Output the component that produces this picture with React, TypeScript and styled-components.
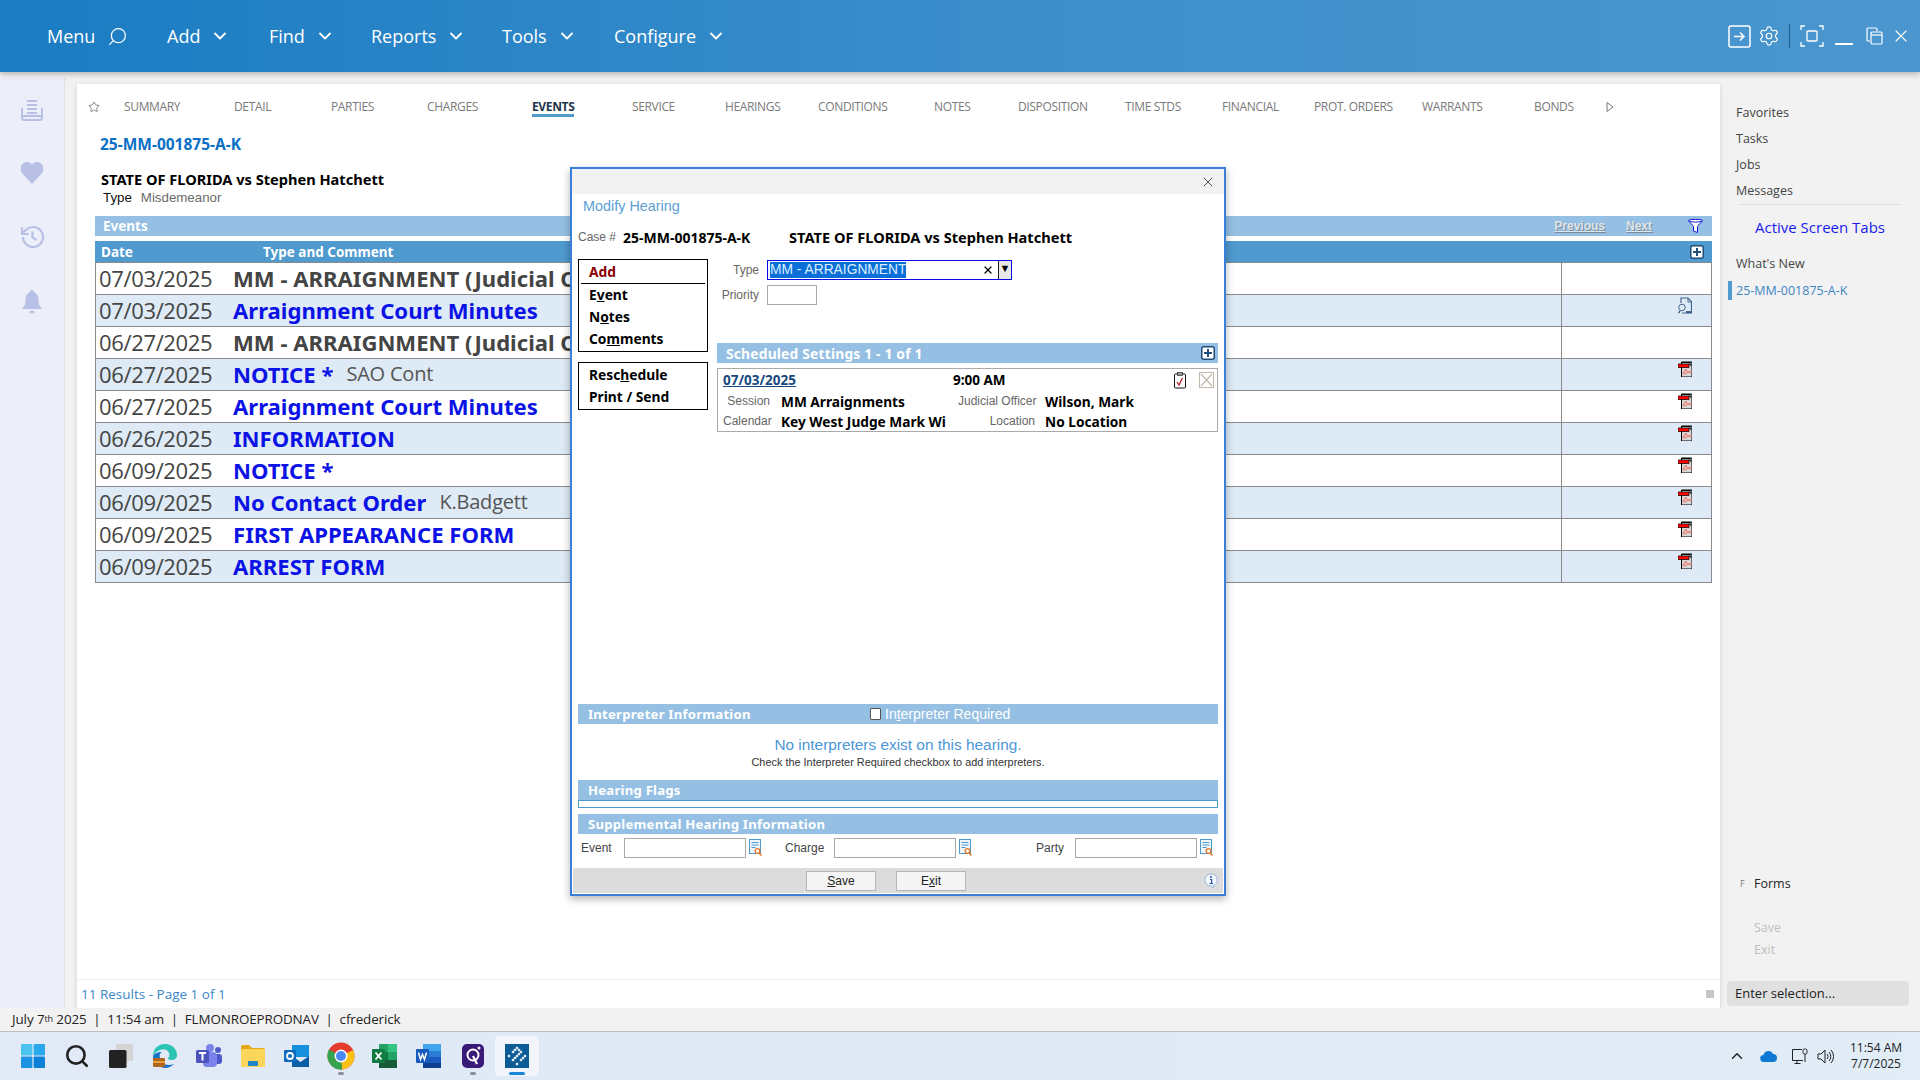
import React from "react";
import styled, { createGlobalStyle } from "styled-components";
import { ChevronDown, ChevronUp, Search, Settings, X, Star } from "lucide-react";

const SEGOE = `"Open Sans", "Noto Sans", sans-serif`;
const TAHOMA = `"Liberation Sans", Arial, sans-serif`;
const TAHOMA_BOLD = `"Noto Sans", "Liberation Sans", sans-serif`;

const GlobalStyle = createGlobalStyle`
  html, body { margin: 0; padding: 0; overflow: hidden; background: #f2f2f2; }
  #root { width: 1920px; height: 1080px; }
  * { box-sizing: border-box; }
`;

const Page = styled.div`
  position: relative;
  width: 1920px;
  height: 1080px;
  display: flex;
  flex-direction: column;
  background: #f2f2f2;
  font-family: ${SEGOE};
  overflow: hidden;
`;

/* top bar */
const TopBar = styled.header`
  height: 72px;
  flex: none;
  display: flex;
  align-items: center;
  justify-content: space-between;
  padding: 0 7px 0 47px;
  background: linear-gradient(90deg, #1a7cc3 0%, #3d8fcb 55%, #4b96cf 100%);
  box-shadow: 0 2px 6px rgba(0, 0, 0, 0.28);
  position: relative;
  z-index: 2;
`;

const MenuList = styled.nav`
  display: flex;
  align-items: center;
`;

const MenuItem = styled.div<{ $w: number }>`
  width: ${(p) => p.$w}px;
  display: flex;
  align-items: center;
  gap: 10px;
  color: #fff;
  font-size: 18px;
  line-height: 24px;
`;

const MenuSearch = styled(Search)`
  margin-left: 2px;
  transform: scaleX(-1);
`;

const WinIcons = styled.div`
  display: flex;
  align-items: center;
  color: #fff;
`;

const WinSlot = styled.div<{ $w: number }>`
  width: ${(p) => p.$w}px;
  display: flex;
  justify-content: center;
  align-items: center;
`;

const WinDivider = styled.div`
  width: 1px;
  height: 24px;
  background: #1f5f92;
  margin: 0 5px;
`;

/* body */
const Body = styled.div`
  flex: none;
  height: 936px;
  display: flex;
`;

const Rail = styled.aside`
  width: 65px;
  margin-top: 6px;
  background: #eceffa;
  border-right: 1px solid #dcdfe8;
  display: flex;
  flex-direction: column;
  align-items: center;
  padding-top: 21px;
  gap: 41px;
  color: #b8c0e6;
  flex: none;
`;

const Panel = styled.main`
  margin: 12px 0 0 12px;
  width: 1643px;
  background: #fff;
  box-shadow: 0 1px 5px rgba(0, 0, 0, 0.14);
  display: flex;
  flex-direction: column;
  padding: 0 8px 0 18px;
  flex: none;
`;

const Tabs = styled.div`
  height: 46px;
  flex: none;
  display: flex;
  align-items: flex-start;
  padding-top: 15px;
  margin-left: -7px;
`;

const StarSlot = styled.div`
  width: 36px;
  height: 15px;
  display: flex;
  align-items: center;
  color: #666;
`;

const Tab = styled.div<{ $w: number }>`
  width: ${(p) => p.$w}px;
  flex: none;
`;

const TabLabel = styled.div<{ $active?: boolean }>`
  width: fit-content;
  font-family: ${SEGOE};
  font-size: 12px;
  line-height: 15px;
  height: 18px;
  white-space: nowrap;
  letter-spacing: -0.35px;
  color: ${(p) => (p.$active ? "#1f3550" : "#7a7a7a")};
  font-weight: ${(p) => (p.$active ? 700 : 400)};
  border-bottom: ${(p) => (p.$active ? "3px solid #4f9acf" : "none")};
`;

const TabArrow = styled.svg`
  margin-top: -2px;
`;

const CaseLink = styled.div`
  font-family: ${TAHOMA_BOLD};
  font-weight: 700;
  font-size: 15.5px;
  line-height: 28px;
  color: #0b6fc4;
  margin-left: 5px;
`;

const CaseTitle = styled.div`
  font-family: ${TAHOMA_BOLD};
  font-weight: 700;
  font-size: 14.6px;
  line-height: 20px;
  color: #000;
  margin: 11px 0 0 6px;
`;

const TypeLine = styled.div`
  display: flex;
  gap: 9px;
  font-family: ${TAHOMA};
  font-size: 13.3px;
  line-height: 18px;
  color: #111;
  margin: 0 0 9px 8px;
`;

const TypeValue = styled.span`
  color: #6b6b6b;
`;

const EventsBar = styled.div`
  height: 20px;
  flex: none;
  background: #95c0e3;
  display: flex;
  align-items: center;
  padding: 0 9px 0 8px;
  margin-bottom: 5px;
`;

const BarTitle = styled.span`
  margin-right: auto;
  font-family: ${TAHOMA_BOLD};
  font-weight: 700;
  font-size: 13.5px;
  color: #fff;
`;

const PagerLink = styled.span<{ $ml: number }>`
  margin-left: ${(p) => p.$ml}px;
  font-family: ${TAHOMA};
  font-weight: 700;
  font-size: 12px;
  text-decoration: underline;
  color: #dfe6ec;
  text-shadow: 1px 1px 0 #7b8a97;
`;

const FunnelSlot = styled.span`
  width: 51px;
  display: flex;
  justify-content: flex-end;
`;

const HeaderRow = styled.div`
  height: 21px;
  flex: none;
  background: #4f9acf;
  display: flex;
  align-items: center;
  padding-right: 8px;
  font-family: ${TAHOMA_BOLD};
  font-weight: 700;
  font-size: 13.5px;
  color: #fff;
`;

const HeadCell = styled.span<{ $w?: number; $pl: number }>`
  width: ${(p) => (p.$w ? `${p.$w}px` : "auto")};
  padding-left: ${(p) => p.$pl}px;
  margin-right: ${(p) => (p.$w ? "0" : "auto")};
`;

const Rows = styled.div`
  flex: none;
  border-left: 1px solid #8a8a8a;
  border-right: 1px solid #8a8a8a;
`;

const Row = styled.div<{ $alt: boolean }>`
  height: 32px;
  display: grid;
  grid-template-columns: 1fr 150px;
  background: ${(p) => (p.$alt ? "#deeaf5" : "#fff")};
  border-top: 1px solid #8a8a8a;
  &:last-child { height: 33px; border-bottom: 1px solid #8a8a8a; }
`;

const RowMain = styled.div`
  display: flex;
  align-items: center;
  overflow: hidden;
  white-space: nowrap;
  padding-bottom: 2px;
`;

const DateCell = styled.span`
  width: 137px;
  flex: none;
  padding-left: 3px;
  font-family: ${SEGOE};
  font-size: 22px;
  letter-spacing: -0.35px;
  color: #444;
`;

const RowTitle = styled.span<{ $link: boolean }>`
  max-width: 338px;
  overflow: hidden;
  font-family: ${TAHOMA_BOLD};
  font-weight: 700;
  font-size: 22.1px;
  color: ${(p) => (p.$link ? "#0b12e6" : "#444")};
`;

const RowNote = styled.span`
  margin-left: 13px;
  font-family: ${SEGOE};
  font-size: 20px;
  letter-spacing: -0.2px;
  color: #555;
`;

const RowIcon = styled.div`
  border-left: 1px solid #8a8a8a;
  display: flex;
  justify-content: flex-end;
  padding: 2px 19px 0 0;
`;

const PanelSpacer = styled.div`
  flex: 1;
`;

const PanelFoot = styled.div`
  height: 29px;
  flex: none;
  margin: 0 -8px 0 -18px;
  border-top: 1px solid #eee;
  display: flex;
  align-items: center;
  justify-content: space-between;
  padding: 0 6px 0 4px;
  color: #3a86c8;
  font-size: 13.5px;
`;

const ScrollMark = styled.div`
  width: 8px;
  height: 8px;
  background: #c8c8c8;
`;

/* right side */
const Side = styled.aside`
  flex: 1;
  padding: 28px 11px 0 7px;
  display: flex;
  flex-direction: column;
  font-size: 13px;
  color: #444;
  & > * { flex: none; }
`;

const SideLink = styled.div`
  height: 26px;
  line-height: 26px;
  padding-left: 9px;
  font-size: 12.5px;
`;

const SideRule = styled.div`
  height: 1px;
  margin: 0 9px 0 13px;
  background: #dedede;
`;

const ActiveTabs = styled.div`
  height: 46px;
  line-height: 44px;
  padding-left: 28px;
  font-size: 15px;
  color: #1a1aee;
`;

const CurrentTab = styled.div`
  height: 26px;
  display: flex;
  align-items: center;
  font-size: 12.5px;
  color: #3c85c6;
  margin-left: 1px;
  &::before {
    content: "";
    width: 4px;
    height: 19px;
    margin-right: 4px;
    background: #4f9acf;
  }
`;

const FormsLine = styled.div`
  margin-top: 570px;
  display: flex;
  align-items: center;
  height: 20px;
  padding-left: 13px;
  color: #222;
  font-size: 12.5px;
`;

const FormsKey = styled.span`
  width: 14px;
  font-size: 9px;
  color: #777;
`;

const DisabledAction = styled.div<{ $mt: number }>`
  margin-top: ${(p) => p.$mt}px;
  padding-left: 27px;
  height: 22px;
  line-height: 22px;
  font-size: 12.5px;
  color: #bdbdbd;
`;

const SideSearch = styled.div`
  margin: 20px 0 0 0;
  height: 25px;
  background: #e0e0e0;
  border-radius: 4px;
  padding-left: 8px;
  line-height: 25px;
  font-size: 13px;
  color: #222;
`;

/* status + task bars */
const StatusBar = styled.div`
  flex: none;
  height: 24px;
  display: flex;
  align-items: center;
  padding: 0 0 2px 12px;
  font-size: 13.4px;
  color: #222;
  letter-spacing: -0.1px;
  white-space: pre;
  border-bottom: 1px solid #b9c0c8;
  background: #f2f2f2;
`;

const StatusSup = styled.sup`
  font-size: 9px;
  line-height: 0;
`;

const Taskbar = styled.footer`
  flex: none;
  height: 48px;
  display: flex;
  justify-content: space-between;
  align-items: center;
  padding: 0 0 0 11px;
  background: linear-gradient(90deg, #e2e9f7 0%, #dfe9f6 40%, #e0ecf6 100%);
`;

const TaskIcons = styled.div`
  display: flex;
  align-items: center;
`;

const TaskSlot = styled.div<{ $state?: "running" | "active" }>`
  position: relative;
  width: 44px;
  height: 40px;
  display: flex;
  align-items: center;
  justify-content: center;
  border-radius: 4px;
  background: ${(p) => (p.$state === "active" ? "#f1f5fb" : "transparent")};
  &::after {
    content: "";
    display: ${(p) => (p.$state ? "block" : "none")};
    position: absolute;
    bottom: 1px;
    left: 50%;
    transform: translateX(-50%);
    width: ${(p) => (p.$state === "active" ? "16px" : "6px")};
    height: 3px;
    border-radius: 2px;
    background: ${(p) => (p.$state === "active" ? "#1a86d8" : "#8b8f96")};
  }
`;

const Tray = styled.div`
  display: flex;
  align-items: center;
  color: #222;
`;

const TraySlot = styled.div<{ $w: number }>`
  width: ${(p) => p.$w}px;
  display: flex;
  justify-content: center;
`;

const Clock = styled.div`
  width: 74px;
  margin-left: 3px;
  margin-right: 7px;
  text-align: center;
  font-size: 12px;
  line-height: 16px;
  color: #222;
`;

/* modal */
const Modal = styled.section`
  position: absolute;
  left: 570px;
  top: 167px;
  width: 656px;
  height: 729px;
  z-index: 5;
  background: #fff;
  border: 2px solid #3a80d8;
  box-shadow: 0 3px 8px rgba(0, 0, 0, 0.3);
  display: flex;
  flex-direction: column;
  font-family: ${TAHOMA};
`;

const ModalTitleBar = styled.div`
  height: 25px;
  flex: none;
  background: #f2f2f2;
  display: flex;
  justify-content: flex-end;
  align-items: center;
  padding-right: 8px;
  color: #333;
`;

const ModalBody = styled.div`
  flex: 1;
  display: flex;
  flex-direction: column;
  padding: 0 6px;
`;

const ModalHeading = styled.div`
  height: 24px;
  line-height: 24px;
  padding-left: 5px;
  font-size: 14.4px;
  color: #5a9fd4;
`;

const CaseLine = styled.div`
  margin-top: 9px;
  height: 22px;
  padding-bottom: 2px;
  display: flex;
  align-items: center;
`;

const CaseKey = styled.span`
  width: 45px;
  font-size: 12px;
  color: #666;
`;

const CaseNo = styled.span`
  width: 166px;
  font-family: ${TAHOMA_BOLD};
  font-size: 14px;
  font-weight: 700;
  color: #000;
`;

const CaseName = styled.span`
  font-family: ${TAHOMA_BOLD};
  font-size: 14.6px;
  font-weight: 700;
  color: #000;
`;

const ModalMain = styled.div`
  flex: 1;
  margin-top: 10px;
  display: grid;
  grid-template-columns: 130px 501px;
  column-gap: 9px;
  align-items: start;
`;

const ActionCol = styled.div`
  display: flex;
  flex-direction: column;
  gap: 10px;
`;

const ActionBox = styled.div`
  border: 1px solid #000;
  padding: 1px 2px 1px;
`;

const ActionHead = styled.div`
  height: 23px;
  border-bottom: 1px solid #000;
  padding-left: 8px;
  line-height: 22px;
  font-family: ${TAHOMA_BOLD};
  font-size: 13.8px;
  font-weight: 700;
  color: #8b0000;
`;

const ActionItem = styled.div`
  height: 22px;
  padding-left: 8px;
  line-height: 22px;
  font-family: ${TAHOMA_BOLD};
  font-size: 13.8px;
  font-weight: 700;
  color: #000;
  u { text-decoration-thickness: 1px; }
`;

const FormCol = styled.div`
  display: flex;
  flex-direction: column;
  padding-top: 1px;
`;

const FormRow = styled.div<{ $mb: number }>`
  display: flex;
  align-items: center;
  height: 20px;
  margin-bottom: ${(p) => p.$mb}px;
`;

const FormKey = styled.span`
  width: 42px;
  white-space: nowrap;
  font-size: 12px;
  color: #666;
  flex: none;
  display: flex;
  justify-content: flex-end;
`;

const ComboBox = styled.div`
  width: 245px;
  height: 20px;
  border: 1px solid #0a0ae6;
  display: flex;
  align-items: stretch;
  margin-left: 8px;
`;

const ComboText = styled.div`
  flex: 1;
  display: flex;
  align-items: center;
  justify-content: space-between;
  padding: 1px 4px 1px 2px;
  font-size: 13.8px;
  color: #333;
`;

const ComboSelected = styled.span`
  background: #0a6fd8;
  color: #dbeeff;
  line-height: 16px;
`;

const ComboButton = styled.div`
  width: 13px;
  border-left: 1px solid #222;
  background: #e8e8e8;
  display: flex;
  justify-content: center;
  padding-top: 2px;
  font-size: 11px;
  line-height: 11px;
  color: #000;
`;

const PlainInput = styled.div<{ $w: number }>`
  width: ${(p) => p.$w}px;
  height: 20px;
  flex: none;
  background: #fff;
  border: 1px solid #a8a8a8;
`;

const PriorityInput = styled(PlainInput)`
  margin-left: 8px;
`;

const SectionBar = styled.div`
  height: 20px;
  flex: none;
  background: #95c0e3;
  display: flex;
  align-items: center;
  padding: 0 3px 0 10px;
  font-family: ${TAHOMA_BOLD};
  font-size: 13.2px;
  font-weight: 700;
  letter-spacing: 0.2px;
  color: #fff;
`;

const ScheduledBar = styled(SectionBar)`
  justify-content: space-between;
  padding-left: 9px;
  font-size: 13.8px;
`;

const SectionTitle = styled.span<{ $w: number }>`
  width: ${(p) => p.$w}px;
  flex: none;
  white-space: nowrap;
`;

const RequiredCheck = styled.div`
  display: flex;
  align-items: center;
  gap: 4px;
  font-family: ${TAHOMA};
  font-size: 14px;
  font-weight: 400;
  letter-spacing: 0;
`;

const CheckBoxMark = styled.span`
  width: 11px;
  height: 12px;
  background: #fff;
  border: 1px solid #555;
  border-radius: 1px;
`;

const Card = styled.div`
  margin-top: 5px;
  height: 64px;
  border: 1px solid #aaa;
  padding: 0 3px 0 5px;
`;

const CardTop = styled.div`
  height: 22px;
  display: flex;
  align-items: center;
`;

const CardDate = styled.a`
  width: 230px;
  font-family: ${TAHOMA_BOLD};
  font-size: 13.5px;
  font-weight: 700;
  color: #17497f;
  text-decoration: underline;
`;

const CardTime = styled.span`
  flex: 1;
  font-family: ${TAHOMA_BOLD};
  font-size: 13.5px;
  font-weight: 700;
  color: #000;
`;

const CardActions = styled.div`
  display: flex;
  align-items: center;
  gap: 12px;
`;

const CardLine = styled.div`
  display: grid;
  grid-template-columns: 47px 188px 77px 1fr;
  height: 20px;
  align-items: center;
`;

const CardKey = styled.span`
  font-size: 12px;
  color: #666;
  text-align: right;
  white-space: nowrap;
`;

const CardValue = styled.span<{ $pl: number }>`
  padding-left: ${(p) => p.$pl}px;
  font-family: ${TAHOMA_BOLD};
  font-size: 13.7px;
  font-weight: 700;
  color: #000;
  white-space: nowrap;
`;

const NoticeBlock = styled.div`
  height: 56px;
  flex: none;
  display: flex;
  flex-direction: column;
  align-items: center;
  padding-top: 12px;
`;

const NoticeMain = styled.div`
  font-size: 15.4px;
  line-height: 18px;
  color: #4b96d6;
`;

const NoticeSub = styled.div`
  font-size: 10.9px;
  line-height: 16px;
  color: #333;
`;

const FlagsBox = styled.div`
  height: 8px;
  flex: none;
  margin-bottom: 6px;
  border: 1px solid #4f9acf;
`;

const FieldsRow = styled.div`
  margin-top: 4px;
  height: 20px;
  display: flex;
  align-items: center;
  margin-bottom: 10px;
`;

const FieldGroup = styled.div<{ $ml: number }>`
  display: flex;
  align-items: center;
  margin-left: ${(p) => p.$ml}px;
  gap: 3px;
`;

const FieldLabel = styled.span<{ $w: number }>`
  width: ${(p) => p.$w - 3}px;
  font-size: 12px;
  color: #444;
`;

const ModalFoot = styled.div`
  position: relative;
  height: 25px;
  flex: none;
  margin: 0 1px 1px;
  background: #dcdcdc;
  display: flex;
  justify-content: flex-start;
  align-items: center;
  padding-left: 233px;
  gap: 20px;
`;

const FootButton = styled.div`
  width: 70px;
  height: 20px;
  background: #f5f5f5;
  border: 1px solid #b5b5b5;
  text-align: center;
  line-height: 18px;
  font-size: 12px;
  color: #222;
`;

const InfoSlot = styled.div`
  position: absolute;
  right: 5px;
  top: 5px;
`;

/* drawings */
const InboxIcon = () => (
  <svg width="22" height="22" viewBox="0 0 22 22" fill="none" stroke="currentColor" strokeWidth="2">
    <path d="M6 2h10M6 6h10M6 10h10M6 14h10" />
    <path d="M1 9v10a2 2 0 0 0 2 2h16a2 2 0 0 0 2-2V9" />
    <path d="M1 17h20" />
  </svg>
);

const HeartIcon = () => (
  <svg width="24" height="22" viewBox="0 0 24 22" fill="currentColor">
    <path d="M12 22 2 11C-1 7 1 0 7 0c2 0 4 1 5 3 1-2 3-3 5-3 6 0 8 7 5 11z" />
  </svg>
);

const HistoryIcon = () => (
  <svg width="24" height="24" viewBox="0 0 24 24" fill="none" stroke="currentColor" strokeWidth="2.2">
    <path d="M3 12a10 10 0 1 0 3.2-7.3L2 8.5" />
    <path d="M2 2.5v6.5h6.5" />
    <path d="M12.5 6.5v6l4 2.5" />
  </svg>
);

const BellIcon = () => (
  <svg width="22" height="24" viewBox="0 0 22 24" fill="currentColor">
    <path d="M11 0a1.6 1.6 0 0 1 1.6 2C16 3 17.500 6 17.500 10c0 5 1.500 7 4 9H.5c2.500-2 4-4 4-9 0-4 1.500-7 4.900-8A1.600 1.600 0 0 1 11 0z" />
    <ellipse cx="11" cy="22" rx="2.500" ry="1.500" />
  </svg>
);

const ArrowBoxIcon = () => (
  <svg width="23" height="23" viewBox="0 0 23 23" fill="none" stroke="currentColor" strokeWidth="1.5">
    <rect x="1" y="1" width="21" height="21" rx="2" />
    <path d="M6 11.500h10M12 7.500l4 4-4 4" />
  </svg>
);

const FocusIcon = () => (
  <svg width="24" height="22" viewBox="0 0 24 22" fill="none" stroke="currentColor" strokeWidth="1.3">
    <path d="M1 5V1h4M19 1h4v4M1 17v4h4M19 21h4v-4" />
    <rect x="7" y="6" width="10" height="10" rx="1" />
  </svg>
);

const MinimizeIcon = () => (
  <svg width="18" height="22" viewBox="0 0 18 22" stroke="currentColor" strokeWidth="2">
    <path d="M0 19h18" />
  </svg>
);

const RestoreIcon = () => (
  <svg width="17" height="18" viewBox="0 0 17 18" fill="none" stroke="currentColor" strokeWidth="1.200">
    <path d="M4 14H2a1.300 1.300 0 0 1-1-1V2a1.300 1.300 0 0 1 1-1h8a1.300 1.300 0 0 1 1 1v2" />
    <rect x="5" y="5" width="11" height="12" rx="1" />
    <path d="M5 8h11" />
  </svg>
);

const FunnelIcon = () => (
  <svg width="15" height="16" viewBox="0 0 15 16" fill="#fff" stroke="#1515d8" strokeWidth="1">
    <path d="M.5 2.500C.5 1 14.500 1 14.500 2.500c0 1-5 5-5 6v6l-4-1.500V8.500c0-1-5-5-5-6z" />
    <path d="M1 3c3 1.500 10 1.500 13 0" />
  </svg>
);

const PlusBox = () => (
  <svg width="14" height="14" viewBox="0 0 14 14">
    <rect x=".75" y=".75" width="12.500" height="12.500" rx="2" fill="#fff" stroke="#1f4e79" strokeWidth="1.500" />
    <path d="M7 3v8M3 7h8" stroke="#1f4e79" strokeWidth="2" />
  </svg>
);

const PdfIcon = () => (
  <svg width="14" height="16" viewBox="0 0 14 16">
    <path d="M3.500 1H14v15H3.500z" fill="#d6d6d6" stroke="#000" />
    <path d="M4 1.500h8V4h2" fill="none" stroke="#000" />
    <path d="M5 13l3-5 1 3 5-.500M8 8l-3 5 8-2" fill="none" stroke="#f0806f" />
    <rect x="0" y="3" width="11" height="3.500" fill="#f00" stroke="#000" strokeWidth=".7" />
  </svg>
);

const DocSearchIcon = () => (
  <svg width="14" height="17" viewBox="0 0 14 17" fill="none" stroke="#43658e">
    <path d="M3 6V1h7l3.500 3.500V16H4" strokeWidth="1.200" />
    <path d="M10 1v4h3.500" />
    <circle cx="4" cy="10.500" r="3.300" />
    <path d="M2 14l-1.500 2" strokeWidth="1.500" />
    <path d="M8 15h5" stroke="#1c3f6d" strokeWidth="1.500" />
  </svg>
);

const ChecklistIcon = () => (
  <svg width="14" height="17" viewBox="0 0 14 17" fill="none">
    <rect x="1.500" y="2" width="11" height="14" rx="1" fill="#fff" stroke="#111" />
    <rect x="4.500" y=".5" width="5" height="3" fill="#999" stroke="#111" strokeWidth=".6" />
    <path d="M4 10l2 3 3.500-7" stroke="#b01020" strokeWidth="1.200" />
  </svg>
);

const CrossBoxIcon = () => (
  <svg width="15" height="16" viewBox="0 0 15 16" fill="none" stroke="#c2b8ac">
    <rect x=".5" y=".5" width="14" height="15" />
    <path d="M2 2l11 12M13 2 2 14" strokeWidth="1.200" />
  </svg>
);

const LookupIcon = () => (
  <svg width="14" height="18" viewBox="0 0 14 18" fill="none">
    <rect x=".5" y=".5" width="11" height="14" fill="#eef5fb" stroke="#4f9acf" />
    <path d="M2.500 3.500h7M2.500 6h7M2.500 8.500h4" stroke="#4f9acf" strokeWidth="1.200" />
    <circle cx="8.500" cy="12" r="2.300" fill="#fff" stroke="#e8792b" strokeWidth="1.300" />
    <path d="M10 14l2.500 2.500" stroke="#e8792b" strokeWidth="1.600" />
  </svg>
);

const InfoIcon = () => (
  <svg width="14" height="16" viewBox="0 0 14 16">
    <path d="M7 1a6 6 0 0 1 2 11.700L9.500 15 7 13A6 6 0 0 1 7 1z" fill="#f3f8ff" stroke="#9db7dc" />
    <circle cx="7" cy="4" r="1" fill="#2b55a8" />
    <path d="M6 6.500h1.600v4M5.500 10.500h3.500" stroke="#2b55a8" strokeWidth="1.200" fill="none" />
  </svg>
);

const WindowsLogo = () => (
  <svg width="24" height="24" viewBox="0 0 24 24">
    <rect x="0" y="0" width="11.400" height="11.400" rx="1" fill="#4cc2f1" />
    <rect x="12.600" y="0" width="11.400" height="11.400" rx="1" fill="#2aa8ec" />
    <rect x="0" y="12.600" width="11.400" height="11.400" rx="1" fill="#1c93e3" />
    <rect x="12.600" y="12.600" width="11.400" height="11.400" rx="1" fill="#0f80d8" />
  </svg>
);

const TaskViewLogo = () => (
  <svg width="24" height="24" viewBox="0 0 24 24">
    <rect x="7" y="0" width="17" height="17" rx="1.500" fill="#d4d4d4" />
    <rect x="0" y="6" width="17.500" height="18" rx="1.500" fill="#222" />
  </svg>
);

const EdgeLogo = () => (
  <svg width="26" height="26" viewBox="0 0 26 26">
    <path d="M1 13C1 5 7 1 13 1c7 0 12 5 12 11 0 4-3 5-6 5-2 0-3-1-3-2 1-1 2-2 1-5-1-3-5-5-9-3-3 1-6 3-7 6z" fill="#29c5b2" />
    <path d="M1 13c0 7 6 12 12 12 4 0 7-2 9-4-6 2-13 1-14-6-1-3 0-5 2-6-5 0-8 2-9 4z" fill="#1773c9" />
    <rect x="1" y="15" width="12" height="9" rx="1" fill="#b0651f" />
    <rect x="1" y="18" width="12" height="2" fill="#e8a33d" />
  </svg>
);

const TeamsLogo = () => (
  <svg width="26" height="26" viewBox="0 0 26 26">
    <circle cx="14" cy="5" r="4" fill="#7b83eb" />
    <circle cx="22" cy="7" r="3" fill="#5059c9" />
    <rect x="17" y="11" width="9" height="10" rx="3" fill="#5059c9" />
    <rect x="7" y="9" width="14" height="15" rx="4" fill="#7b83eb" />
    <rect x="0" y="7" width="13" height="13" rx="1.500" fill="#4b53bc" />
    <path d="M3 10h7M6.500 10v7.500" stroke="#fff" strokeWidth="2" />
  </svg>
);

const FolderLogo = () => (
  <svg width="26" height="26" viewBox="0 0 26 26">
    <path d="M1 4a2 2 0 0 1 2-2h6l3 3h11a2 2 0 0 1 2 2v3H1z" fill="#e5a814" />
    <rect x="1" y="6" width="24" height="18" rx="1.500" fill="#fbd65a" />
    <rect x="8" y="18" width="10" height="5" rx="1" fill="#1f86c8" />
  </svg>
);

const OutlookLogo = () => (
  <svg width="26" height="26" viewBox="0 0 26 26">
    <rect x="8" y="2" width="17" height="12" fill="#1490df" />
    <path d="M8 13l8.500 6L25 13v11H8z" fill="#0a5fa8" />
    <rect x="0" y="7" width="12" height="12" rx="1" fill="#0f6cbd" />
    <circle cx="6" cy="13" r="3" fill="none" stroke="#fff" strokeWidth="1.800" />
  </svg>
);

const ChromeLogo = () => (
  <svg width="28" height="28" viewBox="0 0 28 28">
    <circle cx="14" cy="14" r="13.500" fill="#e33b2e" />
    <path d="M14 14 2.500 21A13.500 13.500 0 0 1 2 7.500z" fill="#32a54e" />
    <path d="M14 14 26 8a13.500 13.500 0 0 1-11 19.500z" fill="#fbc116" />
    <path d="M14 14 2.500 21A13.500 13.500 0 0 0 15 27.500z" fill="#32a54e" />
    <circle cx="14" cy="14" r="6.500" fill="#fff" />
    <circle cx="14" cy="14" r="5" fill="#4a89f3" />
  </svg>
);

const ExcelLogo = () => (
  <svg width="26" height="26" viewBox="0 0 26 26">
    <rect x="7" y="1" width="18" height="24" rx="1" fill="#21a366" />
    <rect x="16" y="1" width="9" height="8" fill="#33c481" />
    <rect x="7" y="9" width="9" height="8" fill="#107c41" />
    <rect x="7" y="17" width="18" height="8" fill="#185c37" />
    <rect x="0" y="6" width="13" height="14" rx="1" fill="#107c41" />
    <path d="M3.500 9.500l6 7M9.500 9.500l-6 7" stroke="#fff" strokeWidth="1.800" />
  </svg>
);

const WordLogo = () => (
  <svg width="26" height="26" viewBox="0 0 26 26">
    <rect x="7" y="1" width="18" height="24" rx="1" fill="#2b7cd3" />
    <rect x="7" y="1" width="18" height="7" fill="#41a5ee" />
    <rect x="7" y="14" width="18" height="6" fill="#185abd" />
    <rect x="7" y="20" width="18" height="5" fill="#103f91" />
    <rect x="0" y="6" width="13" height="14" rx="1" fill="#185abd" />
    <path d="M2.500 9.500l2 7 2-5 2 5 2-7" fill="none" stroke="#fff" strokeWidth="1.500" />
  </svg>
);

const QLogo = () => (
  <svg width="26" height="26" viewBox="0 0 26 26">
    <rect x="2" y="1" width="22" height="24" rx="5" fill="#3a1a78" />
    <circle cx="13" cy="12" r="5.500" fill="none" stroke="#fff" strokeWidth="2" />
    <path d="M13 13l4 8" stroke="#fff" strokeWidth="2.200" />
    <circle cx="19" cy="5" r="1.500" fill="#fff" />
  </svg>
);

const ActiveAppLogo = () => (
  <svg width="24" height="24" viewBox="0 0 24 24">
    <rect width="24" height="24" fill="#0c5d96" />
    {[
      [12, 4], [8, 8], [16, 8], [4, 12], [12, 12], [20, 12],
      [8, 16], [16, 16], [12, 20], [10, 6], [14, 6], [14, 10], [10, 14], [18, 14],
    ].map(([cx, cy]) => (
      <rect key={`${cx}-${cy}`} x={cx - 1.200} y={cy - 1.200} width="2.400" height="2.400" fill="#dfeaf3" />
    ))}
  </svg>
);

const CloudIcon = () => (
  <svg width="17" height="12" viewBox="0 0 17 12">
    <path d="M4 12a3.500 3.500 0 0 1-.5-7 5 5 0 0 1 9.500-1 4 4 0 0 1 0 8z" fill="#0f78d4" />
  </svg>
);

const NetworkIcon = () => (
  <svg width="17" height="17" viewBox="0 0 17 17" fill="none" stroke="#222">
    <path d="M11 1.500H1.500v11H12" />
    <path d="M6 12.500v3M3.500 15.500h6" />
    <rect x="12" y="1" width="4" height="5" rx="1.500" />
    <path d="M14 6v8" />
  </svg>
);

const SpeakerIcon = () => (
  <svg width="17" height="15" viewBox="0 0 17 15" fill="none" stroke="#222">
    <path d="M1 5h3l4-4v13l-4-4H1z" />
    <path d="M10 5a3.500 3.500 0 0 1 0 5M12 3a6.500 6.500 0 0 1 0 9M14 1a9.500 9.500 0 0 1 0 13" />
  </svg>
);

const menuItems = [
  { label: "Add", w: 102 },
  { label: "Find", w: 102 },
  { label: "Reports", w: 131 },
  { label: "Tools", w: 112 },
  { label: "Configure", w: 120 },
];

const tabs = [
  { label: "SUMMARY", w: 110 },
  { label: "DETAIL", w: 97 },
  { label: "PARTIES", w: 96 },
  { label: "CHARGES", w: 105 },
  { label: "EVENTS", w: 100, active: true },
  { label: "SERVICE", w: 93 },
  { label: "HEARINGS", w: 93 },
  { label: "CONDITIONS", w: 116 },
  { label: "NOTES", w: 84 },
  { label: "DISPOSITION", w: 107 },
  { label: "TIME STDS", w: 97 },
  { label: "FINANCIAL", w: 92 },
  { label: "PROT. ORDERS", w: 108 },
  { label: "WARRANTS", w: 112 },
  { label: "BONDS", w: 72 },
];

type EventRow = { date: string; title: string; link: boolean; note?: string; icon?: "pdf" | "doc" };

const events: EventRow[] = [
  { date: "07/03/2025", title: "MM - ARRAIGNMENT (Judicial O", link: false },
  { date: "07/03/2025", title: "Arraignment Court Minutes", link: true, icon: "doc" },
  { date: "06/27/2025", title: "MM - ARRAIGNMENT (Judicial O", link: false },
  { date: "06/27/2025", title: "NOTICE *", link: true, note: "SAO Cont", icon: "pdf" },
  { date: "06/27/2025", title: "Arraignment Court Minutes", link: true, icon: "pdf" },
  { date: "06/26/2025", title: "INFORMATION", link: true, icon: "pdf" },
  { date: "06/09/2025", title: "NOTICE *", link: true, icon: "pdf" },
  { date: "06/09/2025", title: "No Contact Order", link: true, note: "K.Badgett", icon: "pdf" },
  { date: "06/09/2025", title: "FIRST APPEARANCE FORM", link: true, icon: "pdf" },
  { date: "06/09/2025", title: "ARREST FORM", link: true, icon: "pdf" },
];

const taskApps: { key: string; icon: React.ReactNode; state?: "running" | "active" }[] = [
  { key: "start", icon: <WindowsLogo /> },
  { key: "search", icon: <Search size={26} color="#222" strokeWidth={2.4} /> },
  { key: "view", icon: <TaskViewLogo /> },
  { key: "edge", icon: <EdgeLogo /> },
  { key: "teams", icon: <TeamsLogo /> },
  { key: "files", icon: <FolderLogo /> },
  { key: "outlook", icon: <OutlookLogo /> },
  { key: "chrome", icon: <ChromeLogo />, state: "running" },
  { key: "excel", icon: <ExcelLogo /> },
  { key: "word", icon: <WordLogo /> },
  { key: "q", icon: <QLogo />, state: "running" },
  { key: "app", icon: <ActiveAppLogo />, state: "active" },
];

const App = () => {
  return (
    <Page>
      <GlobalStyle />
      <TopBar>
        <MenuList>
          <MenuItem $w={120}>
            Menu
            <MenuSearch size={21} strokeWidth={1.4} />
          </MenuItem>
          {menuItems.map((m) => (
            <MenuItem key={m.label} $w={m.w}>
              {m.label}
              <ChevronDown size={20} strokeWidth={2.2} />
            </MenuItem>
          ))}
        </MenuList>
        <WinIcons>
          <WinSlot $w={30}><ArrowBoxIcon /></WinSlot>
          <WinSlot $w={30}><Settings size={22} strokeWidth={1.3} /></WinSlot>
          <WinDivider />
          <WinSlot $w={34}><FocusIcon /></WinSlot>
          <WinSlot $w={30}><MinimizeIcon /></WinSlot>
          <WinSlot $w={30}><RestoreIcon /></WinSlot>
          <WinSlot $w={24}><X size={20} strokeWidth={1.3} /></WinSlot>
        </WinIcons>
      </TopBar>

      <Body>
        <Rail>
          <InboxIcon />
          <HeartIcon />
          <HistoryIcon />
          <BellIcon />
        </Rail>

        <Panel>
          <Tabs>
            <StarSlot><Star size={12} strokeWidth={1.6} /></StarSlot>
            {tabs.map((t) => (
              <Tab key={t.label} $w={t.w}>
                <TabLabel $active={t.active}>{t.label}</TabLabel>
              </Tab>
            ))}
            <TabArrow width="8" height="20" viewBox="0 0 8 20" fill="none" stroke="#777">
              <path d="M1 5.500l6 4.500-6 4.500z" />
            </TabArrow>
          </Tabs>

          <CaseLink>25-MM-001875-A-K</CaseLink>
          <CaseTitle>STATE OF FLORIDA vs Stephen Hatchett</CaseTitle>
          <TypeLine>
            Type <TypeValue>Misdemeanor</TypeValue>
          </TypeLine>

          <EventsBar>
            <BarTitle>Events</BarTitle>
            <PagerLink $ml={0}>Previous</PagerLink>
            <PagerLink $ml={21}>Next</PagerLink>
            <FunnelSlot>
              <FunnelIcon />
            </FunnelSlot>
          </EventsBar>

          <HeaderRow>
            <HeadCell $w={168} $pl={6}>Date</HeadCell>
            <HeadCell $pl={0}>Type and Comment</HeadCell>
            <PlusBox />
          </HeaderRow>

          <Rows>
            {events.map((e, i) => (
              <Row key={`${e.date}-${i}`} $alt={i % 2 === 1}>
                <RowMain>
                  <DateCell>{e.date}</DateCell>
                  <RowTitle $link={e.link}>{e.title}</RowTitle>
                  {e.note && <RowNote>{e.note}</RowNote>}
                </RowMain>
                <RowIcon>
                  {e.icon === "pdf" && <PdfIcon />}
                  {e.icon === "doc" && <DocSearchIcon />}
                </RowIcon>
              </Row>
            ))}
          </Rows>

          <PanelSpacer />
          <PanelFoot>
            11 Results - Page 1 of 1
            <ScrollMark />
          </PanelFoot>
        </Panel>

        <Side>
          <SideLink>Favorites</SideLink>
          <SideLink>Tasks</SideLink>
          <SideLink>Jobs</SideLink>
          <SideLink>Messages</SideLink>
          <SideRule />
          <ActiveTabs>Active Screen Tabs</ActiveTabs>
          <SideLink>What's New</SideLink>
          <CurrentTab>25-MM-001875-A-K</CurrentTab>
          <FormsLine>
            <FormsKey>F</FormsKey>
            Forms
          </FormsLine>
          <DisabledAction $mt={24}>Save</DisabledAction>
          <DisabledAction $mt={0}>Exit</DisabledAction>
          <SideSearch>Enter selection...</SideSearch>
        </Side>
      </Body>

      <StatusBar>
        July 7<StatusSup>th</StatusSup> 2025  |  11:54 am  |  FLMONROEPRODNAV  |  cfrederick
      </StatusBar>

      <Taskbar>
        <TaskIcons>
          {taskApps.map((a) => (
            <TaskSlot key={a.key} $state={a.state}>
              {a.icon}
            </TaskSlot>
          ))}
        </TaskIcons>
        <Tray>
          <TraySlot $w={30}><ChevronUp size={18} strokeWidth={2} /></TraySlot>
          <TraySlot $w={32}><CloudIcon /></TraySlot>
          <TraySlot $w={30}><NetworkIcon /></TraySlot>
          <TraySlot $w={22}><SpeakerIcon /></TraySlot>
          <Clock>
            11:54 AM
            <br />
            7/7/2025
          </Clock>
        </Tray>
      </Taskbar>

      <Modal>
        <ModalTitleBar>
          <X size={16} strokeWidth={1.3} />
        </ModalTitleBar>
        <ModalBody>
          <ModalHeading>Modify Hearing</ModalHeading>
          <CaseLine>
            <CaseKey>Case #</CaseKey>
            <CaseNo>25-MM-001875-A-K</CaseNo>
            <CaseName>STATE OF FLORIDA vs Stephen Hatchett</CaseName>
          </CaseLine>

          <ModalMain>
            <ActionCol>
              <ActionBox>
                <ActionHead>Add</ActionHead>
                <ActionItem>E<u>v</u>ent</ActionItem>
                <ActionItem>N<u>o</u>tes</ActionItem>
                <ActionItem>Co<u>m</u>ments</ActionItem>
              </ActionBox>
              <ActionBox>
                <ActionItem>Resc<u>h</u>edule</ActionItem>
                <ActionItem>Print / Send</ActionItem>
              </ActionBox>
            </ActionCol>

            <FormCol>
              <FormRow $mb={5}>
                <FormKey>Type</FormKey>
                <ComboBox>
                  <ComboText>
                    <ComboSelected>MM - ARRAIGNMENT</ComboSelected>
                    <X size={12} strokeWidth={2.4} color="#000" />
                  </ComboText>
                  <ComboButton>▼</ComboButton>
                </ComboBox>
              </FormRow>
              <FormRow $mb={38}>
                <FormKey>Priority</FormKey>
                <PriorityInput $w={50} />
              </FormRow>

              <ScheduledBar>
                <span>Scheduled Settings 1 - 1 of 1</span>
                <PlusBox />
              </ScheduledBar>
              <Card>
                <CardTop>
                  <CardDate>07/03/2025</CardDate>
                  <CardTime>9:00 AM</CardTime>
                  <CardActions>
                    <ChecklistIcon />
                    <CrossBoxIcon />
                  </CardActions>
                </CardTop>
                <CardLine>
                  <CardKey>Session</CardKey>
                  <CardValue $pl={11}>MM Arraignments</CardValue>
                  <CardKey>Judicial Officer</CardKey>
                  <CardValue $pl={10}>Wilson, Mark</CardValue>
                </CardLine>
                <CardLine>
                  <CardKey>Calendar</CardKey>
                  <CardValue $pl={11}>Key West Judge Mark Wi</CardValue>
                  <CardKey>Location</CardKey>
                  <CardValue $pl={10}>No Location</CardValue>
                </CardLine>
              </Card>
            </FormCol>
          </ModalMain>

          <SectionBar>
            <SectionTitle $w={282}>Interpreter Information</SectionTitle>
            <RequiredCheck>
              <CheckBoxMark />
              <span>In<u>t</u>erpreter Required</span>
            </RequiredCheck>
          </SectionBar>
          <NoticeBlock>
            <NoticeMain>No interpreters exist on this hearing.</NoticeMain>
            <NoticeSub>Check the Interpreter Required checkbox to add interpreters.</NoticeSub>
          </NoticeBlock>
          <SectionBar>Hearing Flags</SectionBar>
          <FlagsBox />
          <SectionBar>Supplemental Hearing Information</SectionBar>
          <FieldsRow>
            <FieldGroup $ml={3}>
              <FieldLabel $w={43}>Event</FieldLabel>
              <PlainInput $w={122} />
              <LookupIcon />
            </FieldGroup>
            <FieldGroup $ml={22}>
              <FieldLabel $w={49}>Charge</FieldLabel>
              <PlainInput $w={122} />
              <LookupIcon />
            </FieldGroup>
            <FieldGroup $ml={63}>
              <FieldLabel $w={39}>Party</FieldLabel>
              <PlainInput $w={122} />
              <LookupIcon />
            </FieldGroup>
          </FieldsRow>
        </ModalBody>
        <ModalFoot>
          <FootButton><u>S</u>ave</FootButton>
          <FootButton>E<u>x</u>it</FootButton>
          <InfoSlot><InfoIcon /></InfoSlot>
        </ModalFoot>
      </Modal>
    </Page>
  );
};

export default App;
